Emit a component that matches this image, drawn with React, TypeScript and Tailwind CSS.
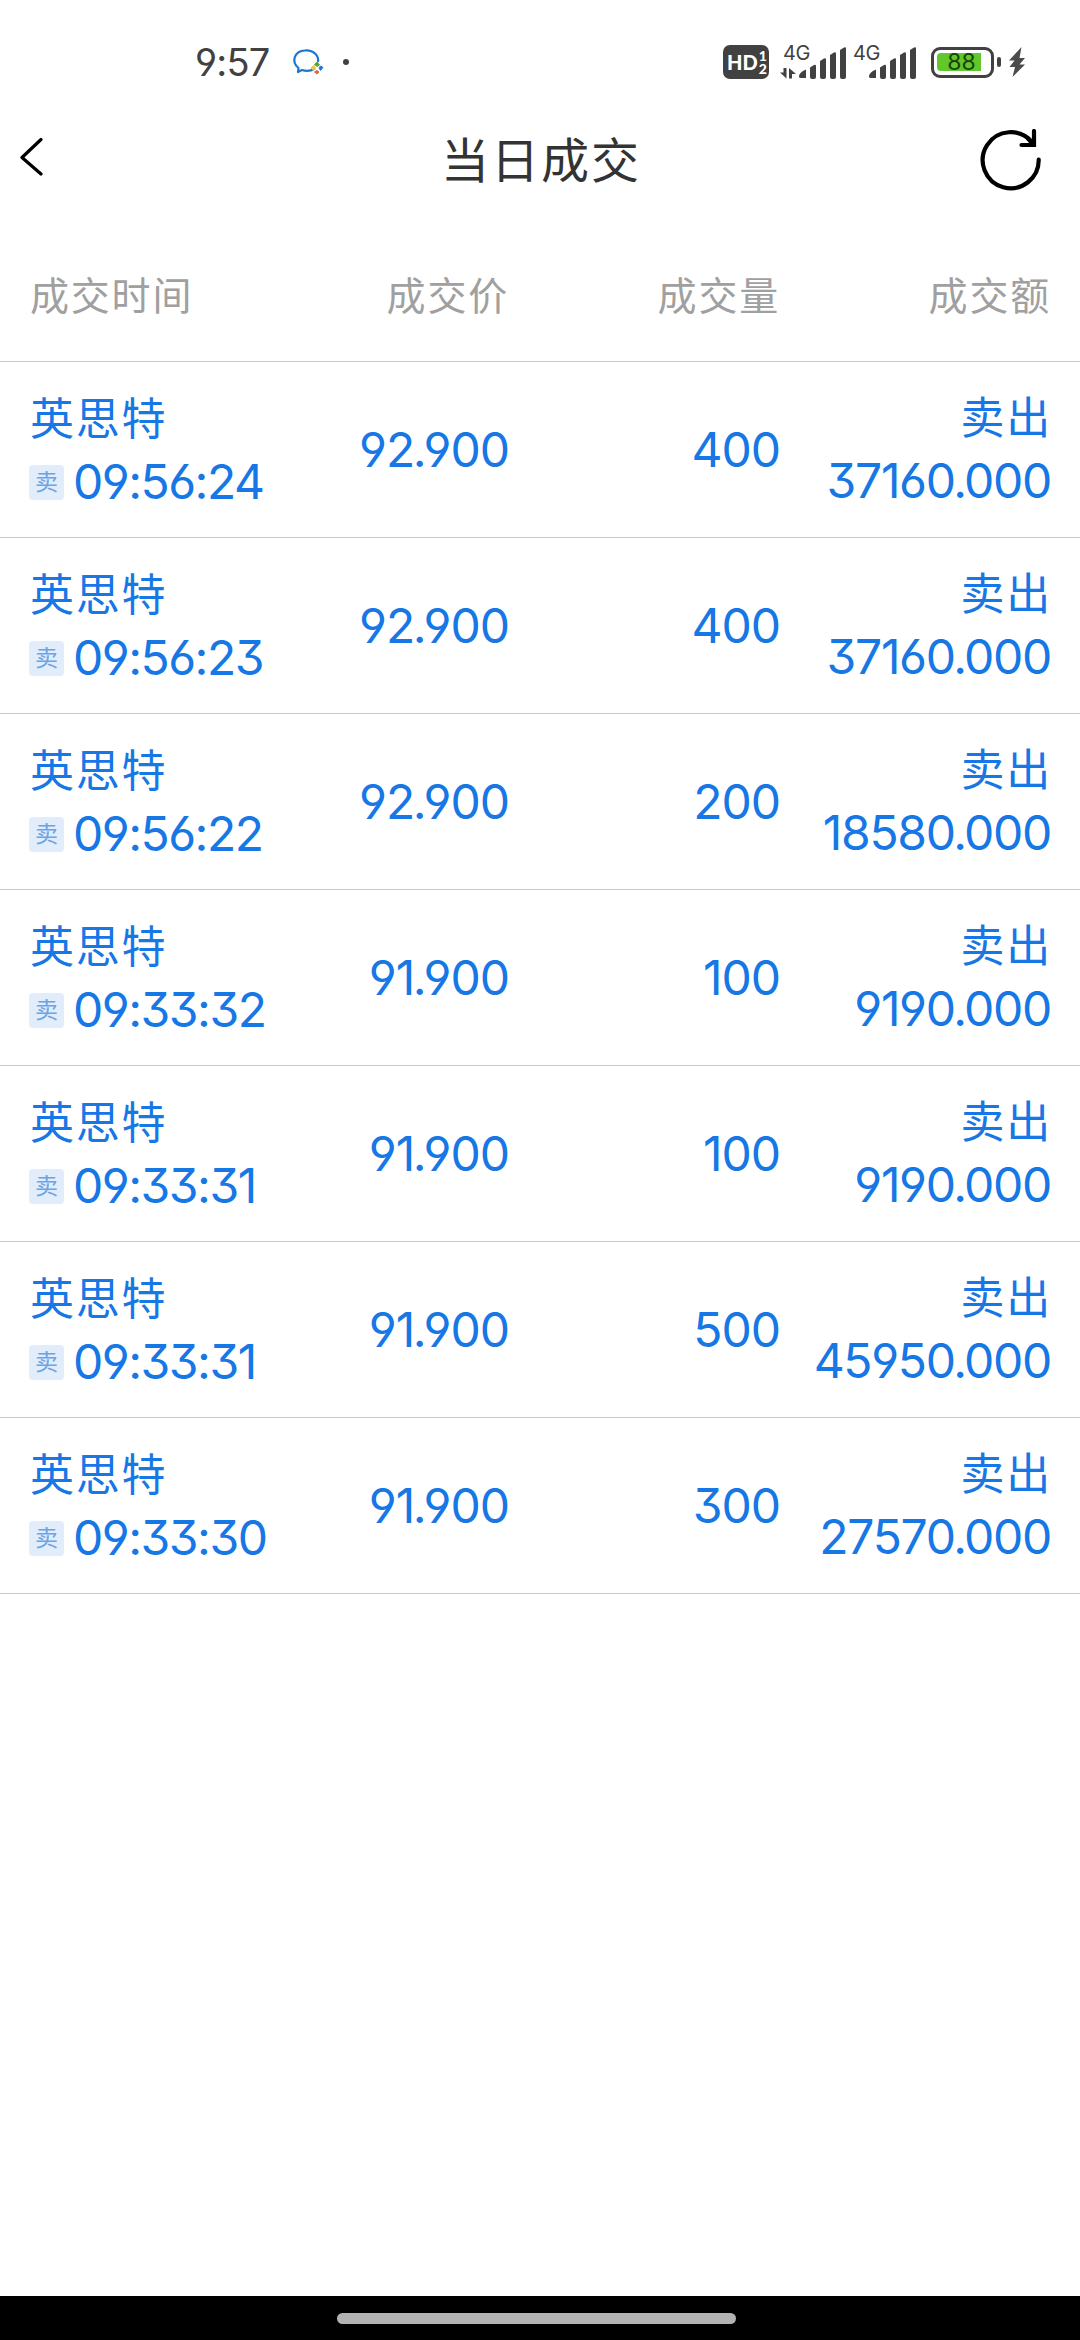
import React from 'react';

type Trade = { time: string; price: string; volume: string; amount: string };

const trades: Trade[] = [
  { time: '09:56:24', price: '92.900', volume: '400', amount: '37160.000' },
  { time: '09:56:23', price: '92.900', volume: '400', amount: '37160.000' },
  { time: '09:56:22', price: '92.900', volume: '200', amount: '18580.000' },
  { time: '09:33:32', price: '91.900', volume: '100', amount: '9190.000' },
  { time: '09:33:31', price: '91.900', volume: '100', amount: '9190.000' },
  { time: '09:33:31', price: '91.900', volume: '500', amount: '45950.000' },
  { time: '09:33:30', price: '91.900', volume: '300', amount: '27570.000' },
];

function ChatIcon() {
  return (
    <svg className="ml-[20px] h-9 w-9" viewBox="0 0 36 36" fill="none">
      <path d="M25 24.500C20 27.500 15 27 12 26L8 28L8.500 24C1 18 4 7 15 6.500C24 6 29 12 28 18" stroke="#1b78d0" strokeWidth="2.200" strokeLinejoin="round" />
      <path d="M27 18L29.500 21L27 22.500L24.500 20.500Z" fill="#56a936" stroke="#56a936" />
      <path d="M21 24L24 21.500L25.500 24L23.500 26.500Z" fill="#f3c33c" stroke="#f3c33c" />
      <path d="M33 23.500L30.500 26.500L29 24L30.500 22Z" fill="#2478d4" stroke="#2478d4" />
      <path d="M27 30L24.500 28L27 26.500L29 28Z" fill="#e0683a" stroke="#e0683a" />
    </svg>
  );
}

function Signal({ data }: { data?: boolean }) {
  return (
    <div className="relative h-[36px] w-[67px]">
      <svg className="h-[36px] w-[67px]" viewBox="0 0 67 36" fill="#414141">
        {data && (
          <g>
            <path d="M3.500 24H6.500V34.500L0 28.500H3.500Z" />
            <path d="M9 34.500H12V30H16L9 24Z" />
          </g>
        )}
        <path d="M19 33q0-5 7-7.500v8.500h-5q-2 0-2-1Z" />
        <path d="M30 23.500l4-2.500q2-1 2 1V33q0 2-2 2h-2q-2 0-2-2Z" />
        <path d="M40 17l4-2.500q2-1 2 1V33q0 2-2 2h-2q-2 0-2-2Z" />
        <path d="M50 11l4-2.500q2-1 2 1V33q0 2-2 2h-2q-2 0-2-2Z" />
        <path d="M60 6l4-2.500q2-1 2 1V33q0 2-2 2h-2q-2 0-2-2Z" />
      </svg>
      <span className="absolute -top-[1px] left-[3px] text-[20px] leading-5 tracking-[-0.5px] text-[#414141]">4G</span>
    </div>
  );
}

function StatusBar() {
  return (
    <div className="flex h-[124px] items-center pl-[195px] text-[#414141]">
      <div className="w-[75px] text-[38px] leading-none tracking-[-0.8px]">9:57</div>
      <ChatIcon />
      <div className="ml-[17px] h-[6px] w-[6px] rounded-full bg-[#414141]" />
      <div className="ml-[374px] flex h-[34px] w-[46px] items-center rounded-[7px] bg-[#414141] pl-[4px] text-white">
        <span className="font-['Lato'] text-[20px] font-black leading-none">HD</span>
        <span className="flex flex-col pl-[1px] font-['Lato'] text-[14px] font-black leading-[13px]">
          <span>1</span>
          <span>2</span>
        </span>
      </div>
      <div className="ml-[11px]"><Signal data /></div>
      <div className="ml-[3px]"><Signal /></div>
      <div className="relative ml-[14px] flex h-[31px] w-[63px] items-center rounded-[9px] border-[3.5px] border-[#414141] p-[3px]">
        <div className="h-[18px] w-[44px] rounded-l-[4px] bg-[#62c72a]" />
        <span className="absolute inset-x-0 pr-[2px] text-center text-[23px] leading-none text-[#17440b]">88</span>
      </div>
      <div className="ml-[3px] h-[10px] w-[4px] rounded-full bg-[#414141]" />
      <svg className="ml-[7px] h-[32px] w-[18px]" viewBox="0 0 18 32" fill="#4b4b4b">
        <path d="M13.500 1L1 14.500H6.500L1.500 21H7L4.500 31L17 18.500H11.500L17 12H11.500Z" />
      </svg>
    </div>
  );
}

function TitleBar() {
  return (
    <div className="flex h-[72px] items-center justify-between pl-5 pr-[38px]">
      <svg className="mb-[6px] h-10 w-[62px]" viewBox="0 0 62 40" fill="none" stroke="#000" strokeWidth="3.200" strokeLinecap="round" strokeLinejoin="round">
        <path d="M21 2.500L2 20.500L21 37" />
      </svg>
      <h1 className="pl-[20px] pt-[2px] text-[48px] leading-none tracking-[2px] text-[#333]">当日成交</h1>
      <svg className="h-[62px] w-[62px]" viewBox="0 0 62 62" fill="none" stroke="#000" strokeWidth="4.200" strokeLinecap="round">
        <path d="M58.700 30.500A28 28 0 1 1 52 13" />
        <path d="M54 2V16H41.500" strokeLinejoin="miter" />
        <path d="M48 9.500L53 15" />
      </svg>
    </div>
  );
}

const columns = 'grid grid-cols-[240px_239px_271px_271px] items-center px-[30px]';

function Amount({ value }: { value: string }) {
  const [whole, fraction] = value.split('.');
  return (
    <>
      {whole}
      <span className="-ml-[1.500px] tracking-[-3px]">.</span>
      {fraction}
    </>
  );
}

function TradeRow({ trade }: { trade: Trade }) {
  return (
    <div className={`${columns} h-[176px] border-b border-[#c8c8c8] text-[48px] leading-[64px] tracking-[-1px] text-[#1677e5]`}>
      <div>
        <div className="pt-[4px] text-[44px] leading-[61px] tracking-[1.800px]">英思特</div>
        <div className="flex items-center">
          <span className="-ml-px flex h-[35px] w-[35px] shrink-0 items-center justify-center rounded-[4px] bg-[#e1edfb] text-[23px] leading-none tracking-normal text-[#6ba3e4]">卖</span>
          <span className="ml-[9px] whitespace-nowrap tracking-[-1.500px]">{trade.time}</span>
        </div>
      </div>
      <div className="text-right">{<Amount value={trade.price} />}</div>
      <div className="text-right">{trade.volume}</div>
      <div className="pt-[2px] text-right tracking-[-1.300px]">
        <div className="-mr-[1px] text-[44px] leading-[61px] tracking-[1.800px]">卖出</div>
        <div><Amount value={trade.amount} /></div>
      </div>
    </div>
  );
}

export default function App() {
  return (
    <div className="flex h-[2340px] w-[1080px] flex-col bg-white font-['Inter','Noto_Sans_CJK_SC',sans-serif] [font-feature-settings:'cv03','cv04','cv09']">
      <StatusBar />
      <TitleBar />
      <div className={`${columns} h-[166px] border-b border-[#c8c8c8] pt-[35px] text-[39px] tracking-[1.800px] text-[#a0a0a0]`}>
        <div>成交时间</div>
        <div className="text-right">成交价</div>
        <div className="text-right">成交量</div>
        <div className="text-right">成交额</div>
      </div>
      <div className="flex-1">
        {trades.map((trade, i) => <TradeRow key={i} trade={trade} />)}
      </div>
      <div className="h-[44px] bg-black pl-[337px] pt-[17px]">
        <div className="h-[11px] w-[399px] rounded-full bg-[#b2b2b2]" />
      </div>
    </div>
  );
}
